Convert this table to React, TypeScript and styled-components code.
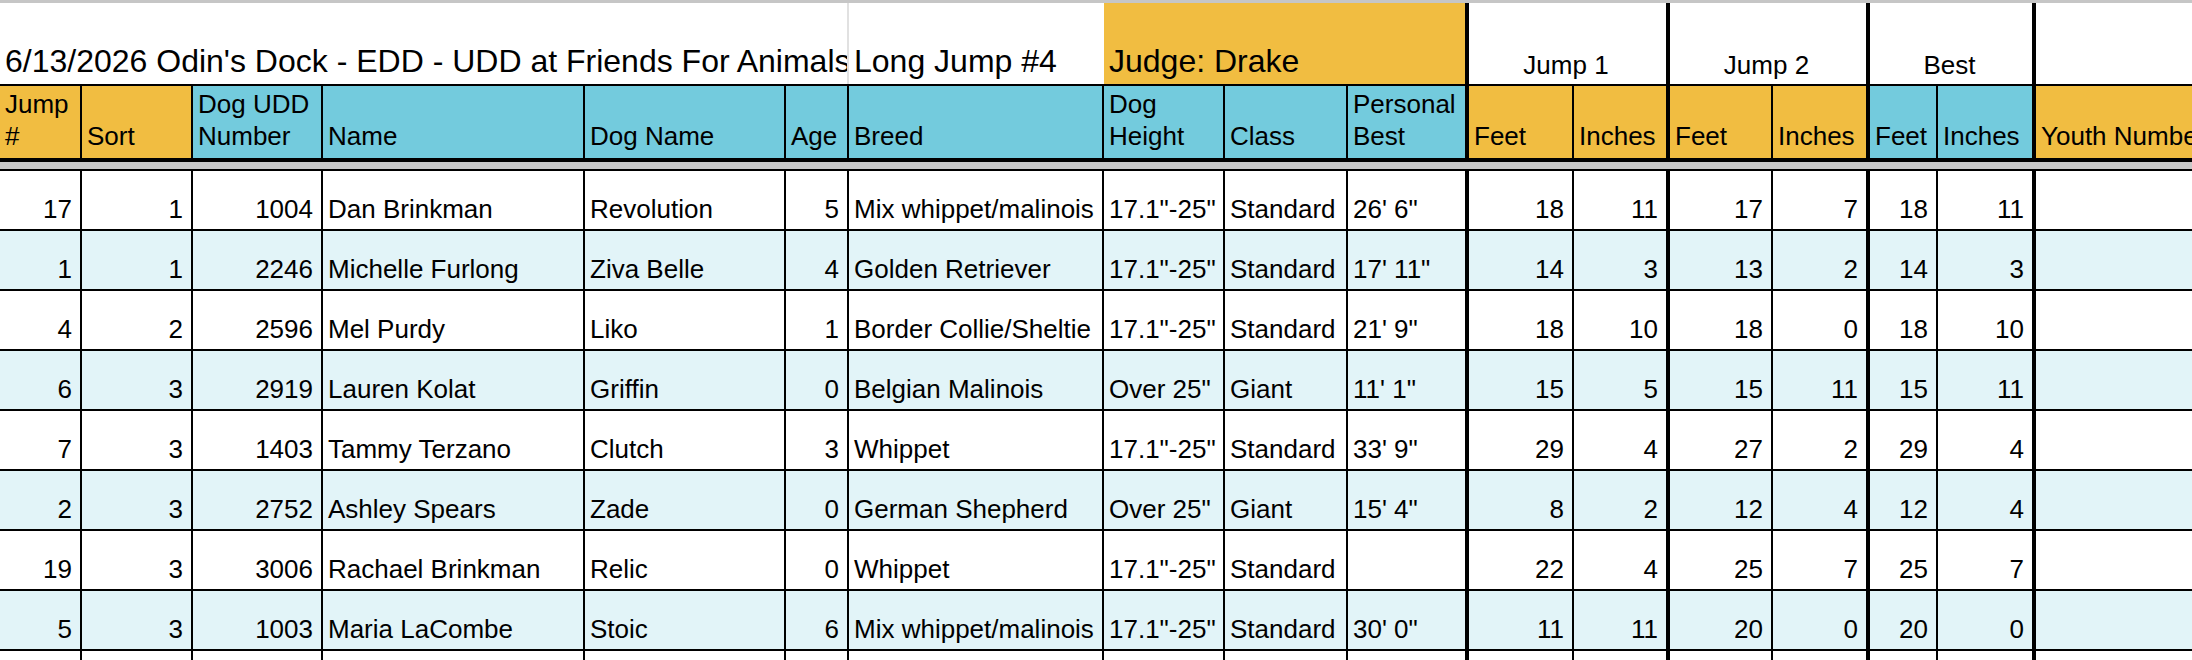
import styled, { createGlobalStyle } from "styled-components";

const GlobalStyle = createGlobalStyle`
  html, body {
    margin: 0;
    padding: 0;
    background: #ffffff;
    overflow: hidden;
  }
  body {
    font-family: "Liberation Sans", Arial, sans-serif;
    color: #000000;
  }
`;

const ORANGE = "#f1bd41";
const TEAL = "#73cbdd";
const SHADE = "#e2f4f8";

type Edge = "thin" | "thick" | "light" | "none";

interface ICol {
  w: number;
  edge: Edge;
  head: string;
  headBg: string;
  num: boolean;
}

const columns: ICol[] = [
  { w: 82, edge: "thin", head: "Jump #", headBg: ORANGE, num: true },
  { w: 111, edge: "thin", head: "Sort", headBg: ORANGE, num: true },
  { w: 130, edge: "thin", head: "Dog UDD Number", headBg: TEAL, num: true },
  { w: 262, edge: "thin", head: "Name", headBg: TEAL, num: false },
  { w: 201, edge: "thin", head: "Dog Name", headBg: TEAL, num: false },
  { w: 63, edge: "thin", head: "Age", headBg: TEAL, num: true },
  { w: 255, edge: "thin", head: "Breed", headBg: TEAL, num: false },
  { w: 121, edge: "thin", head: "Dog Height", headBg: TEAL, num: false },
  { w: 123, edge: "thin", head: "Class", headBg: TEAL, num: false },
  { w: 121, edge: "thick", head: "Personal Best", headBg: TEAL, num: false },
  { w: 105, edge: "thin", head: "Feet", headBg: ORANGE, num: true },
  { w: 96, edge: "thick", head: "Inches", headBg: ORANGE, num: true },
  { w: 103, edge: "thin", head: "Feet", headBg: ORANGE, num: true },
  { w: 97, edge: "thick", head: "Inches", headBg: ORANGE, num: true },
  { w: 68, edge: "thin", head: "Feet", headBg: TEAL, num: true },
  { w: 98, edge: "thick", head: "Inches", headBg: TEAL, num: true },
  { w: 156, edge: "none", head: "Youth Number", headBg: ORANGE, num: false },
];

const gridTemplate = columns.map((c) => `${c.w}px`).join(" ");

const edgeStyle: Record<Edge, string> = {
  thin: "2px solid #000000",
  thick: "4px solid #000000",
  light: "2px solid #e1e1e1",
  none: "none",
};

const Sheet = styled.div`
  width: 2192px;
  height: 660px;
  overflow: hidden;
  background: #ffffff;
`;

const TopStrip = styled.div`
  height: 3px;
  background: #c6c6c6;
`;

const Row = styled.div<{ $height: number; $bottom: string; $bg?: string }>`
  display: grid;
  grid-template-columns: ${gridTemplate};
  height: ${(p) => p.$height}px;
  box-sizing: border-box;
  border-bottom: ${(p) => p.$bottom};
  background: ${(p) => p.$bg ?? "#ffffff"};
`;

const Cell = styled.div<{
  $span?: number;
  $edge: Edge;
  $bg?: string;
  $align?: "left" | "right" | "center";
  $size?: number;
  $wrap?: boolean;
  $pad?: number;
}>`
  grid-column: span ${(p) => p.$span ?? 1};
  display: flex;
  align-items: flex-end;
  justify-content: ${(p) =>
    p.$align === "right"
      ? "flex-end"
      : p.$align === "center"
      ? "center"
      : "flex-start"};
  text-align: ${(p) => p.$align ?? "left"};
  box-sizing: border-box;
  min-width: 0;
  overflow: hidden;
  padding: 0 8px ${(p) => p.$pad ?? 4}px 5px;
  border-right: ${(p) => edgeStyle[p.$edge]};
  background: ${(p) => p.$bg ?? "transparent"};
  font-size: ${(p) => p.$size ?? 26}px;
  line-height: ${(p) => ((p.$size ?? 26) === 32 ? 38 : 32)}px;
  white-space: ${(p) => (p.$wrap ? "normal" : "nowrap")};
`;

const Band = styled.div`
  height: 9px;
  box-sizing: border-box;
  background: #c8c8c8;
  border-bottom: 2px solid #000000;
`;

const rows: string[][] = [
  ["17", "1", "1004", "Dan Brinkman", "Revolution", "5", "Mix whippet/malinois", '17.1"-25"', "Standard", "26' 6\"", "18", "11", "17", "7", "18", "11", ""],
  ["1", "1", "2246", "Michelle Furlong", "Ziva Belle", "4", "Golden Retriever", '17.1"-25"', "Standard", "17' 11\"", "14", "3", "13", "2", "14", "3", ""],
  ["4", "2", "2596", "Mel Purdy", "Liko", "1", "Border Collie/Sheltie", '17.1"-25"', "Standard", "21' 9\"", "18", "10", "18", "0", "18", "10", ""],
  ["6", "3", "2919", "Lauren Kolat", "Griffin", "0", "Belgian Malinois", 'Over 25"', "Giant", "11' 1\"", "15", "5", "15", "11", "15", "11", ""],
  ["7", "3", "1403", "Tammy Terzano", "Clutch", "3", "Whippet", '17.1"-25"', "Standard", "33' 9\"", "29", "4", "27", "2", "29", "4", ""],
  ["2", "3", "2752", "Ashley Spears", "Zade", "0", "German Shepherd", 'Over 25"', "Giant", "15' 4\"", "8", "2", "12", "4", "12", "4", ""],
  ["19", "3", "3006", "Rachael Brinkman", "Relic", "0", "Whippet", '17.1"-25"', "Standard", "", "22", "4", "25", "7", "25", "7", ""],
  ["5", "3", "1003", "Maria LaCombe", "Stoic", "6", "Mix whippet/malinois", '17.1"-25"', "Standard", "30' 0\"", "11", "11", "20", "0", "20", "0", ""],
  ["", "", "", "", "", "", "", "", "", "", "", "", "", "", "", "", ""],
];

function App() {
  return (
    <>
      <GlobalStyle />
      <Sheet>
        <TopStrip />
        <Row $height={83} $bottom="2px solid #000000">
          <Cell $span={6} $edge="light" $size={32}>
            6/13/2026 Odin's Dock - EDD - UDD at Friends For Animals
          </Cell>
          <Cell $edge="none" $size={32}>
            Long Jump #4
          </Cell>
          <Cell $span={3} $edge="thick" $size={32} $bg={ORANGE}>
            Judge: Drake
          </Cell>
          <Cell $span={2} $edge="thick" $align="center" $pad={3}>
            Jump 1
          </Cell>
          <Cell $span={2} $edge="thick" $align="center" $pad={3}>
            Jump 2
          </Cell>
          <Cell $span={2} $edge="thick" $align="center" $pad={3}>
            Best
          </Cell>
          <Cell $edge="none" />
        </Row>
        <Row $height={76} $bottom="4px solid #000000">
          {columns.map((c, i) => (
            <Cell
              key={i}
              $edge={c.edge}
              $bg={c.headBg}
              $wrap={i !== columns.length - 1}
              $pad={6}
            >
              {c.head}
            </Cell>
          ))}
        </Row>
        <Band />
        {rows.map((r, ri) => (
          <Row
            key={ri}
            $height={60}
            $bottom="2px solid #000000"
            $bg={ri % 2 === 1 ? SHADE : "#ffffff"}
          >
            {r.map((v, ci) => (
              <Cell
                key={ci}
                $edge={columns[ci].edge}
                $align={columns[ci].num ? "right" : "left"}
              >
                {v}
              </Cell>
            ))}
          </Row>
        ))}
      </Sheet>
    </>
  );
}

export default App;
